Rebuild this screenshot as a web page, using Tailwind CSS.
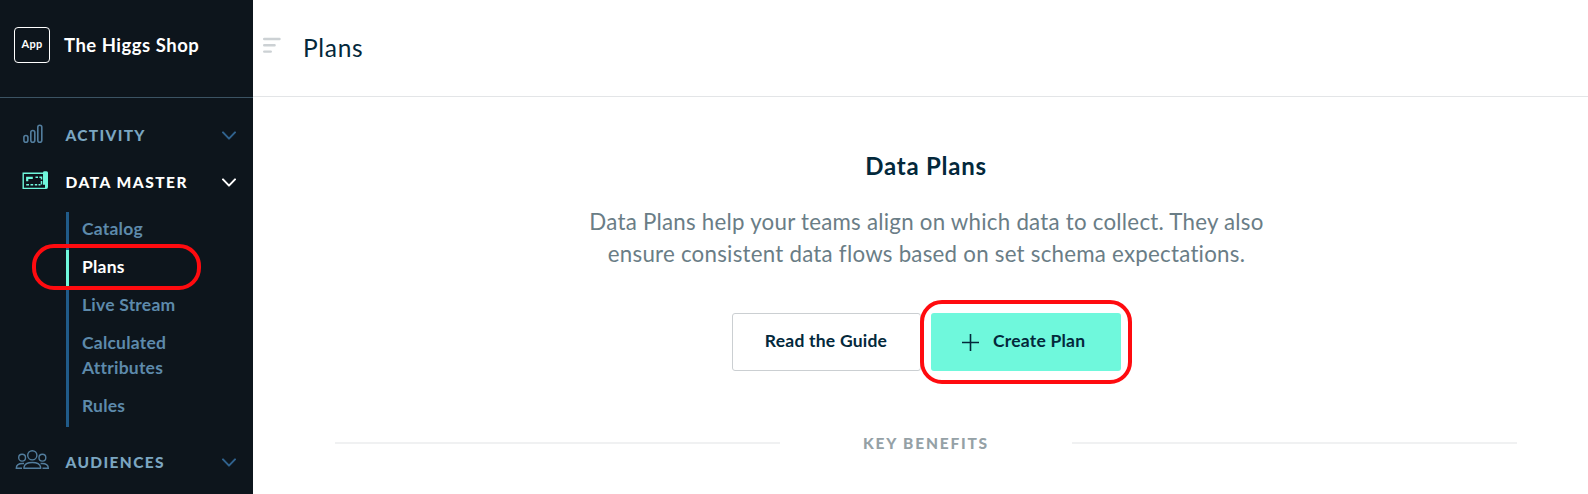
<!DOCTYPE html>
<html lang="en">
<head>
<meta charset="utf-8">
<title>Plans</title>
<script src="https://cdn.jsdelivr.net/npm/@tailwindcss/browser@4"></script>
</head>
<body class="relative flex h-[494px] w-[1588px] overflow-hidden bg-white font-['Lato','Open_Sans',sans-serif]">
<aside class="h-[494px] w-[253px] shrink-0 bg-[#0d151c]">
  <div class="flex h-[98px] items-start border-b border-[#3b5363] pl-[14px] pt-[27px]">
    <div class="flex size-9 items-center justify-center rounded-[4px] border border-white pb-[2px] text-[11px] font-bold tracking-[0.3px] text-white">App</div>
    <div class="ml-[14px] mt-[6px] whitespace-nowrap text-[18.5px] font-bold leading-6 tracking-[0.5px] text-white">The Higgs Shop</div>
  </div>
  <nav class="pt-6">
    <div class="flex h-[47px] items-start pr-[17px] text-[#7ba6c1]">
      <div class="w-[65.5px] pl-[22px]">
        <svg class="mt-[2px]" width="22" height="21" viewBox="0 0 22 21" fill="none" stroke="#527d9d" stroke-width="1.6"><rect x="1.9" y="11.5" width="4" height="6.8" rx="2"/><rect x="8.8" y="6.5" width="4" height="11.8" rx="2"/><rect x="15.8" y="1.3" width="4" height="17" rx="2"/></svg>
      </div>
      <span class="whitespace-nowrap text-[15.5px] font-black leading-[26px] tracking-[1.3px]">ACTIVITY</span>
      <svg class="ml-auto mt-[8px]" width="14" height="11" viewBox="0 0 14 11" fill="none" stroke="#30628d" stroke-width="2" stroke-linecap="round" stroke-linejoin="round"><path d="M1 2.4 7 8.6 13 2.4"/></svg>
    </div>
    <div class="flex h-[43px] items-start pr-[17px] text-white">
      <div class="w-[65.5px] pl-[22px]">
        <svg class="mt-[1px]" width="28" height="21" viewBox="0 0 28 21" fill="none" stroke="#6ff8dc"><path stroke-width="1.4" d="M21 3.3H1.2V18.4H23.5"/><path fill="#6ff8dc" stroke="none" d="M21 3.2V2.6Q21 1.2 22.5 1.2H24.5Q26 1.2 26 2.8V17Q26 19 24.2 19H23V14.8H21Z"/><path stroke-width="2.2" d="M5.2 11.3V7.8H10.8"/><path stroke-width="1.5" d="M13.5 7.2H16M17.4 7.2H19.5V9.5M19.5 11V14.5M4.2 14.8H7M8.5 14.8H11.2M12.8 14.8H15.2M16.5 14.8H18.5"/></svg>
      </div>
      <span class="whitespace-nowrap text-[15.5px] font-black leading-[26px] tracking-[1.5px]">DATA MASTER</span>
      <svg class="ml-auto mt-[8px]" width="14" height="11" viewBox="0 0 14 11" fill="none" stroke="#ffffff" stroke-width="2" stroke-linecap="round" stroke-linejoin="round"><path d="M1 2.4 7 8.6 13 2.4"/></svg>
    </div>
    <div class="ml-[65.5px] text-[17.5px] font-bold leading-[25px] tracking-[0.22px] text-[#5d8aab]">
      <div class="h-[38px] border-l-3 border-[#205b89] pl-[13.5px] pt-1">Catalog</div>
      <div class="h-[38px] border-l-3 border-[#6ff8dc] pl-[13.5px] pt-1 text-white">Plans</div>
      <div class="h-[38px] border-l-3 border-[#205b89] pl-[13.5px] pt-1">Live Stream</div>
      <div class="h-[63px] border-l-3 border-[#205b89] pl-[13.5px] pt-1">Calculated<br>Attributes</div>
      <div class="h-[38px] border-l-3 border-[#205b89] pl-[13.5px] pt-1">Rules</div>
    </div>
    <div class="mt-[22px] flex items-start pr-[17px] text-[#7ba6c1]">
      <div class="w-[65.5px] pl-[15px]">
        <svg width="35" height="22" viewBox="0 0 35 22" fill="none" stroke="#527d9d" stroke-width="1.4"><circle cx="17.3" cy="6.3" r="4.6"/><circle cx="7.1" cy="8.7" r="3.4"/><circle cx="27.4" cy="8.7" r="3.4"/><path d="M9 19.3V18.2Q9.8 13.5 17.3 13.5T25.6 18.2V19.3ZM7 19.3H1.3Q1.3 14.5 7.5 14.5H9M27.5 19.3H33.3Q33.3 14.5 27 14.5H25.6"/></svg>
      </div>
      <span class="whitespace-nowrap text-[15.5px] font-black leading-[26px] tracking-[1.35px]">AUDIENCES</span>
      <svg class="ml-auto mt-[8px]" width="14" height="11" viewBox="0 0 14 11" fill="none" stroke="#30628d" stroke-width="2" stroke-linecap="round" stroke-linejoin="round"><path d="M1 2.4 7 8.6 13 2.4"/></svg>
    </div>
  </nav>
</aside>
<main class="flex-1">
  <header class="flex h-[97px] items-start border-b border-[#e3e5e7] pl-[10px]">
    <svg class="mt-[37px]" width="18" height="17" viewBox="0 0 18 17" fill="none" stroke="#ccd1d4" stroke-width="2.4" stroke-linecap="round"><path d="M1.2 2H16.5M1.2 8.3H11.6M1.2 14.6H7.8"/></svg>
    <h1 class="ml-[21px] mt-[32px] whitespace-nowrap pl-[1px] text-[24.5px] leading-8 tracking-[0.7px] text-[#03283b]">Plans</h1>
  </header>
  <section class="flex flex-col items-center pl-[5px]">
    <h2 class="mt-[53px] text-[24px] font-bold leading-8 tracking-[0.75px] text-[#03283b] ml-[6px]">Data Plans</h2>
    <p class="mt-[23.5px] ml-[7px] whitespace-nowrap text-center text-[22.3px] leading-8 tracking-[0.24px] text-[#6a7d86]">Data Plans help your teams align on which data to collect. They also<br>ensure consistent data flows based on set schema expectations.</p>
    <div class="mt-[43.5px] ml-[6px] flex gap-[10px] text-[17.5px] font-bold tracking-[0.22px] text-[#03283b]">
      <div class="flex h-[58px] w-[189px] items-center justify-center rounded-[3px] border border-[#cbcfd2] pb-[1px]">Read the Guide</div>
      <div class="flex h-[58px] w-[190px] items-center rounded-[3px] bg-[#6ff8dc] pl-[31px] pb-[1px]">
        <svg class="mt-[1px] mr-[14.5px] shrink-0" width="17" height="17" viewBox="0 0 17 17" stroke="#03283b" stroke-width="1.6"><path d="M8.5 0V17M0 8.5H17"/></svg>
        <span class="whitespace-nowrap">Create Plan</span>
      </div>
    </div>
    <div class="mt-[60px] ml-[6px] flex w-[1182px] items-center">
      <div class="h-[2px] w-[445px] bg-[#f0f1f2]"></div>
      <div class="flex-1 whitespace-nowrap text-center text-[15.5px] font-black leading-6 tracking-[1.8px] text-[#95a1a6]">KEY BENEFITS</div>
      <div class="h-[2px] w-[445px] bg-[#f0f1f2]"></div>
    </div>
  </section>
</main>
<div class="absolute left-[32px] top-[244px] h-[46px] w-[169px] rounded-[22px] border-4 border-[#ff0b0f]"></div>
<div class="absolute left-[920px] top-[300px] h-[84px] w-[212px] rounded-[22px] border-4 border-[#ff0b0f]"></div>
</body>
</html>
